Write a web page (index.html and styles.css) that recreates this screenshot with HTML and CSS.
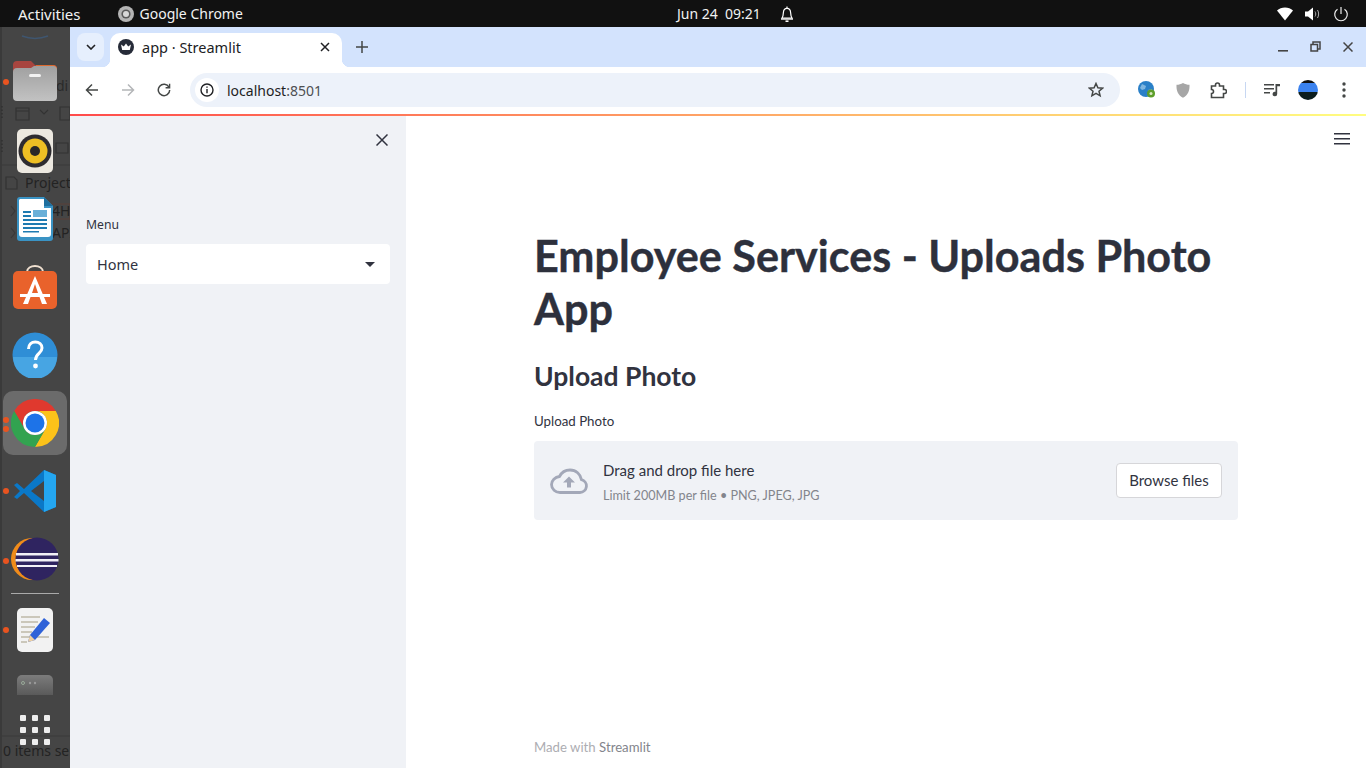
FILE: index.html
```html
<!DOCTYPE html>
<html lang="en">
<head>
    <meta charset="UTF-8">
    <title>app · Streamlit</title>
    <link rel="stylesheet" href="styles.css">
</head>
<body>
    <div class="topbar">
        <div class="topbar-left">
            <span class="activities">Activities</span>
            <span class="app-name">
                <svg class="app-icon" width="18" height="18" viewBox="0 0 18 18"><circle cx="9" cy="9" r="8" fill="#b5b5b5"/><circle cx="9" cy="9" r="4.6" fill="#5a5a5a"/><circle cx="9" cy="9" r="3" fill="#d8d8d8"/></svg>
                Google Chrome
            </span>
        </div>
        <div class="clock">
            <span>Jun 24&nbsp;&nbsp;09:21</span>
            <svg width="16" height="18" viewBox="0 0 16 18" fill="none" stroke="#fff" stroke-width="1.2"><path d="M3 13c1-1.5 1.3-3 1.4-5.500C4.500 5 6 3.300 8 3.300s3.500 1.700 3.600 4.200c.1 2.500.4 4 1.400 5.500z"/><path d="M8 1.500v1.800"/><path d="M2 14h12" stroke-width="1.400"/><path d="M6.500 16.200h3" stroke-width="1.600"/></svg>
        </div>
        <div class="tray">
            <svg width="16" height="14" viewBox="0 0 16 14"><path d="M0 3.500C2 1.500 5 .5 8 .5s6 1 8 3L8 13.500z" fill="#fff"/></svg>
            <svg width="16" height="14" viewBox="0 0 16 14"><path d="M0 4.500h3L8 .5v13l-5-4H0z" fill="#fff"/><path d="M10 4.500c1 1.500 1 3.500 0 5M12.500 3c1.500 2.500 1.500 5.500 0 8" fill="none" stroke="#aaa" stroke-width="1"/></svg>
            <svg width="16" height="16" viewBox="0 0 16 16" fill="none" stroke="#eee" stroke-width="1.200"><path d="M8 1v7"/><path d="M4.500 3.200a6.300 6.300 0 1 0 7 0"/></svg>
        </div>
    </div>

    <div class="desktop">
        <div class="dock">
            <!-- window behind the dock, shows through it -->
            <svg class="ghost-layer" width="70" height="741" viewBox="0 27 70 741" fill="none" stroke="#333" stroke-width="1.200">
                <path d="M22 36c8 3 18 3 26 0" stroke="#3f5670" stroke-width="1.500"/>
                <path d="M2 106v14M2 140v12" stroke-dasharray="1.500 2" stroke="#2e2e2e"/>
                <path d="M16 108h13v12H16zM16 111h13"/>
                <path d="M40 110l4 4 4-4"/>
                <path d="M60 107h10v13H60zM56 143h12v10H56z"/>
                <path d="M46 149h3"/>
                <path d="M0 165h70" stroke="#3b3b3b"/>
                <path d="M6 177h8l3 3v9H6z"/>
                <path d="M11 206l4 5-4 5M11 228l4 5-4 5" stroke="#383838"/>
                <path d="M50 204h20v15H50z" stroke="#5a4038"/>
                <path d="M0 736h70" stroke="#3a3a3a"/>
            </svg>
            <span class="ghost ghost-di">di</span>
            <span class="ghost ghost-project">Project</span>
            <span class="ghost ghost-4h">4H</span>
            <span class="ghost ghost-api">API</span>
            <span class="ghost ghost-items">0 items se</span>

            <div class="dock-item">
                <span class="run-dot dot-folder"></span>
                <svg width="46" height="46" viewBox="0 0 46 46">
                    <defs><linearGradient id="folderFront" x1="0" y1="0" x2="0" y2="1"><stop offset="0" stop-color="#a0a0a0"/><stop offset="1" stop-color="#c2c2c2"/></linearGradient></defs>
                    <path d="M1 5a4 4 0 0 1 4-4h14l4 4h18a4 4 0 0 1 4 4v12H1z" fill="#a8453f"/><path d="M24 5h17a4 4 0 0 1 4 4v10H24z" fill="#dd6a2f"/><path d="M1 12a4 4 0 0 1 4-4h14l3-2h19a4 4 0 0 1 4 4v27a4 4 0 0 1-4 4H5a4 4 0 0 1-4-4z" fill="url(#folderFront)"/><rect x="17" y="14" width="12" height="3" rx="1.500" fill="#f2f2f2"/>
                </svg>
            </div>
            <div class="dock-item">
                <svg width="36" height="44" viewBox="0 0 36 44"><rect width="36" height="44" rx="5" fill="#ece8e0"/><circle cx="18" cy="22" r="16.500" fill="#2e2c30"/><circle cx="18" cy="22" r="12.500" fill="#eebf24"/><circle cx="18" cy="22" r="5" fill="#2a2828"/></svg>
            </div>
            <div class="dock-item">
                <svg width="36" height="44" viewBox="0 0 36 44"><path d="M3 0h24l9 9v32a3 3 0 0 1-3 3H3a3 3 0 0 1-3-3V3a3 3 0 0 1 3-3z" fill="#3a93c4"/><path d="M3 2h24v9h7v26a3 3 0 0 1-3 3H5a3 3 0 0 1-3-3V3z" fill="#fff"/><path d="M27 0l9 9h-9z" fill="#1e6f9e"/><path d="M6 14h8v2H6zM6 18h8v2H6zM6 22h24v2H6zM6 26h24v2H6zM6 30h24v2H6zM6 34h16v1.500H6z" fill="#1f7bb1"/><path d="M16 13h14v7H16z" fill="#6ab0d8"/></svg>
            </div>
            <div class="dock-item">
                <svg width="46" height="44" viewBox="0 0 46 44"><path d="M15 7c0-8 16-8 16 0" fill="none" stroke="#f0e0d0" stroke-width="2"/><rect x="1" y="6" width="44" height="38" rx="5" fill="#e9622b"/><path d="M23 11L11 39h5l2.500-7h9l2.500 7h5z" fill="#fff"/><path d="M8 29h30v3H8z" fill="#fff"/><path d="M23 19l-3 9h6z" fill="#e9622b"/></svg>
            </div>
            <div class="dock-item">
                <svg width="46" height="46" viewBox="0 0 46 46"><circle cx="23" cy="23" r="22.500" fill="#2f8ed6"/><path d="M1 25h44a22 22 0 0 1-44 0z" fill="#47a5e3"/><path d="M16.500 17c0-4.500 3-7 6.800-7s6.700 2.500 6.700 6c0 5.500-6.500 5.500-6.500 12" fill="none" stroke="#fff" stroke-width="3"/><circle cx="23.500" cy="34" r="2.400" fill="#fff"/></svg>
            </div>
            <div class="dock-item dock-active">
                <span class="run-dot dot-a"></span>
                <span class="run-dot dot-b"></span>
                <svg width="48" height="48" viewBox="0 0 48 48"><path d="M3.200 12A24 24 0 0 1 44.800 12H24A12 12 0 0 0 13.600 30z" fill="#e0392e"/><path d="M44.800 12A24 24 0 0 1 24 48L34.400 30A12 12 0 0 0 24 12z" fill="#fcc21a"/><path d="M24 48A24 24 0 0 1 3.200 12L13.600 30A12 12 0 0 0 34.400 30z" fill="#32a350"/><circle cx="24" cy="24" r="12" fill="#fff"/><circle cx="24" cy="24" r="9.500" fill="#1d73e8"/></svg>
            </div>
            <div class="dock-item">
                <span class="run-dot"></span>
                <svg width="42" height="42" viewBox="0 0 42 42"><path d="M30 0L10 19 3 13l-3 2 6 6-6 6 3 2 7-6 20 19 12-5V5z" fill="#0a78c8"/><path d="M30 0l12 5v32l-12 5z" fill="#24a6f0"/><path d="M30 11L17 21l13 10z" fill="#444"/></svg>
            </div>
            <div class="dock-item">
                <span class="run-dot dot-eclipse"></span>
                <svg width="48" height="46" viewBox="0 0 48 46"><circle cx="21" cy="23" r="21" fill="#f08c1a"/><circle cx="26" cy="23" r="21.500" fill="#2f2460"/><path d="M5 17h42v2.500H5zM4.500 23h43v2.500h-43zM6 29h40v2H6z" fill="#f2f0f6"/></svg>
            </div>
            <div class="dock-sep"></div>
            <div class="dock-item">
                <span class="run-dot"></span>
                <svg width="36" height="44" viewBox="0 0 36 44"><rect width="36" height="44" rx="5" fill="#f2f2f2"/><path d="M4 8h19v2H4zM4 13h17v2H4zM4 18h14v2H4zM4 23h11v2H4zM4 28h28v2H4zM4 33h6v2H4z" fill="#cbc7ba"/><path d="M27 10l6 5-15 17-7 2 2-7z" fill="#2f62d8"/><path d="M13 27l5 5-7 2z" fill="#f0d0a0"/></svg>
            </div>
            <div class="dock-item dock-short">
                <svg width="36" height="20" viewBox="0 0 36 20">
                    <defs><linearGradient id="driveFade" x1="0" y1="0" x2="0" y2="1"><stop offset="0" stop-color="#7c7c7c"/><stop offset="1" stop-color="#5a5a5a"/></linearGradient></defs>
                    <path d="M5 0h26a5 5 0 0 1 5 5v15H0V5a5 5 0 0 1 5-5z" fill="url(#driveFade)"/><circle cx="6" cy="8" r="1.500" fill="none" stroke="#9a9"/><circle cx="13" cy="8" r="1.200" fill="#999"/><circle cx="18" cy="8" r="1.200" fill="#999"/>
                </svg>
            </div>
            <div class="app-grid">
                <i></i><i></i><i></i><i></i><i></i><i></i><i></i><i></i><i></i>
            </div>
        </div>

        <div class="window">
            <div class="tabstrip">
                <div class="tab-list-btn">
                    <svg width="10" height="6" viewBox="0 0 10 6" fill="none" stroke="#202124" stroke-width="1.600"><path d="M1 1l4 4 4-4"/></svg>
                </div>
                <div class="tab">
                    <svg width="16" height="16" viewBox="0 0 16 16"><circle cx="8" cy="8" r="8" fill="#262b38"/><path d="M3 5.500l2.800 2L8 4.500l2.200 3 2.800-2-1.200 5.500H4.200z" fill="#fff"/></svg>
                    <span class="tab-title">app · Streamlit</span>
                    <svg class="tab-close" width="10" height="10" viewBox="0 0 10 10" stroke="#202124" stroke-width="1.500"><path d="M1 1l8 8M9 1l-8 8"/></svg>
                </div>
                <svg class="new-tab" width="12" height="12" viewBox="0 0 12 12" stroke="#444746" stroke-width="1.500"><path d="M6 0v12M0 6h12"/></svg>
                <div class="win-controls">
                    <svg width="10" height="10" viewBox="0 0 10 10"><path d="M0 8h10v1.600H0z" fill="#444"/></svg>
                    <svg width="11" height="11" viewBox="0 0 11 11" fill="none" stroke="#444" stroke-width="1.500"><path d="M3 3V1h7v7H8"/><path d="M1 3.500h6.500V10H1z"/></svg>
                    <svg width="10" height="10" viewBox="0 0 10 10" stroke="#444" stroke-width="1.500"><path d="M.5.500l9 9M9.500.5l-9 9"/></svg>
                </div>
            </div>

            <div class="toolbar">
                <svg width="14" height="14" viewBox="0 0 14 14" fill="none" stroke="#444746" stroke-width="1.500"><path d="M13 7H1.500M7 1.500L1.500 7 7 12.500"/></svg>
                <svg width="14" height="14" viewBox="0 0 14 14" fill="none" stroke="#b4b6b8" stroke-width="1.500"><path d="M1 7h11.500M7 1.500L12.500 7 7 12.500"/></svg>
                <svg width="14" height="14" viewBox="0 0 14 14" fill="none" stroke="#444746" stroke-width="1.500"><path d="M12 4.200A5.700 5.700 0 1 0 12.700 7"/><path d="M12.600.8v4H8.600" stroke-width="1.400"/></svg>
                <div class="omnibox">
                    <span class="site-info">
                        <svg width="14" height="14" viewBox="0 0 14 14" fill="none" stroke="#202124" stroke-width="1.400"><circle cx="7" cy="7" r="6"/><path d="M7 6v4.200M7 3.400v1.400"/></svg>
                    </span>
                    <span class="url">localhost<span class="url-port">:8501</span></span>
                    <svg class="star" width="16" height="16" viewBox="0 0 16 16" fill="none" stroke="#444746" stroke-width="1.500"><path d="M8 1.500l1.900 4.300 4.600.4-3.500 3 1.100 4.600L8 11.400l-4.100 2.400L5 9.200l-3.500-3 4.600-.4z"/></svg>
                </div>
                <div class="extensions">
                    <svg width="18" height="18" viewBox="0 0 18 18"><circle cx="8" cy="8" r="8" fill="#2a80c8"/><path d="M4 3l4 2-1 3-3 1-2-2zM10 9l4-1 1 3-4 4z" fill="#7fb6e0"/><circle cx="13" cy="12.500" r="4" fill="#5d9e2a"/><circle cx="13" cy="12.500" r="1.500" fill="#d8e8c0"/></svg>
                    <svg class="ext-wide" width="14" height="15" viewBox="0 0 14 15"><path d="M7 0c2 1.200 4 1.700 6.500 1.800.3 6-1.500 10.500-6.500 13C2 12.300.2 7.800.5 1.800 3 1.700 5 1.200 7 0z" fill="#a6a6a6"/></svg>
                    <svg class="ext-wide" width="17" height="17" viewBox="0 0 17 17" fill="none" stroke="#444746" stroke-width="1.600"><path d="M1.500 4h4V3a2 2 0 0 1 4 0v1h4v3.500h1a2 2 0 0 1 0 4h-1v4h-12v-4a2 2 0 0 0 0-4z"/></svg>
                    <span class="ext-divider"></span>
                    <svg width="16" height="14" viewBox="0 0 16 14" fill="#444746"><path d="M0 1h10v1.600H0zM0 5h10v1.600H0zM0 9h6v1.600H0z"/><path d="M11.500 1H16v2.200h-2.800V11a2.300 2.300 0 1 1-1.700-2.200z"/></svg>
                    <span class="avatar"></span>
                    <svg class="kebab" width="4" height="16" viewBox="0 0 4 16" fill="#444746"><circle cx="2" cy="2" r="1.700"/><circle cx="2" cy="8" r="1.700"/><circle cx="2" cy="14" r="1.700"/></svg>
                </div>
            </div>

            <div class="app-decoration"></div>

            <div class="app">
                <aside class="sidebar">
                    <svg class="sidebar-close" width="12" height="12" viewBox="0 0 12 12" stroke="#31333f" stroke-width="1.500"><path d="M.5.500l11 11M11.500.5l-11 11"/></svg>
                    <label class="select-label">Menu</label>
                    <div class="select">
                        <span>Home</span>
                        <span class="caret"></span>
                    </div>
                </aside>
                <main class="main">
                    <svg class="hamburger" width="16" height="12" viewBox="0 0 16 12" fill="#31333f"><path d="M0 0h16v1.600H0zM0 5h16v1.600H0zM0 10h16v1.600H0z"/></svg>
                    <div class="block">
                        <h1>Employee Services - Uploads Photo App</h1>
                        <h2>Upload Photo</h2>
                        <label class="upload-label">Upload Photo</label>
                        <div class="dropzone">
                            <svg class="cloud" width="38" height="26" viewBox="0 0 38 26"><path d="M10 24.500h20a6.500 6.500 0 0 0 1.500-12.800C30.500 6 26 2 20 2c-5 0-8.500 2.500-10.500 6.500C5 9 1.500 12.500 1.500 16.500c0 4.500 4 8 8.500 8z" fill="none" stroke="#a3a8b8" stroke-width="2.800"/><path d="M19 8.500l6 6h-4v5h-4v-5h-4z" fill="#a3a8b8"/></svg>
                            <div class="dropzone-text">
                                <span class="drop-title">Drag and drop file here</span>
                                <span class="drop-limit">Limit 200MB per file • PNG, JPEG, JPG</span>
                            </div>
                            <button class="browse">Browse files</button>
                        </div>
                    </div>
                    <footer class="footer">Made with <span class="footer-link">Streamlit</span></footer>
                </main>
            </div>
        </div>
    </div>
</body>
</html>
```

FILE: styles.css
```css
* {
    box-sizing: border-box;
}
html, body {
    height: 100%;
}
body {
    margin: 0;
    display: flex;
    flex-direction: column;
    overflow: hidden;
    font-family: "Lato", "Noto Sans", sans-serif;
    color: #31333f;
    background-color: #fff;
}

/* gnome top bar */
.topbar {
    position: relative;
    flex: 0 0 27px;
    display: flex;
    align-items: center;
    justify-content: space-between;
    padding: 0 17px 0 18px;
    background-color: #111;
    color: #f2f2f2;
    font-family: "Noto Sans", sans-serif;
    font-size: 14px;
}
.topbar-left {
    display: flex;
    align-items: center;
    gap: 36px;
}
.activities {
    font-size: 15px;
}
.app-name {
    display: flex;
    align-items: center;
    gap: 5px;
}
.clock {
    position: absolute;
    left: 677px;
    top: 0;
    height: 27px;
    display: flex;
    align-items: center;
    gap: 18px;
}
.tray {
    display: flex;
    align-items: center;
    gap: 12px;
}

.desktop {
    flex: 1;
    display: flex;
    min-height: 0;
}

/* dock */
.dock {
    position: relative;
    flex: 0 0 70px;
    display: flex;
    flex-direction: column;
    align-items: center;
    padding-top: 22px;
    overflow: hidden;
    background-color: #454545;
    box-shadow: inset 2px 0 0 #3a3a3a;
}
.ghost-layer {
    position: absolute;
    left: 0;
    top: 0;
}
.ghost {
    position: absolute;
    color: #232323;
    font-family: "Noto Sans", sans-serif;
    font-size: 14px;
    white-space: nowrap;
}
.ghost-di { left: 56px; top: 49px; color: #2a2a2a; }
.ghost-project { left: 25px; top: 146px; }
.ghost-4h { left: 52px; top: 174px; }
.ghost-api { left: 52px; top: 196px; }
.ghost-items { left: 3px; top: 714px; }
.dock-item {
    position: relative;
    flex: 0 0 68px;
    width: 64px;
    display: flex;
    align-items: center;
    justify-content: center;
}
.dock-active {
    height: 64px;
    flex-basis: 64px;
    margin: 2px 0;
    border-radius: 10px;
    background-color: #6b6b6b;
}
.dock-short {
    flex-basis: 30px;
    margin-top: 6px;
}
.run-dot {
    position: absolute;
    left: 0;
    top: 31px;
    width: 6px;
    height: 6px;
    border-radius: 50%;
    background-color: #e95420;
}
.dot-folder { top: 30px; }
.dot-a { top: 26px; }
.dot-b { top: 35px; }
.dot-eclipse { top: 33px; }
.dock-sep {
    flex: 0 0 1px;
    width: 48px;
    margin: 0 0 2px;
    background-color: #aaa;
}
.app-grid {
    position: relative;
    display: grid;
    grid-template-columns: repeat(3, 6px);
    gap: 6px;
    margin-top: 15px;
}
.app-grid i {
    height: 6px;
    border-radius: 1px;
    background-color: #eee;
}

/* browser window */
.window {
    flex: 1;
    display: flex;
    flex-direction: column;
    min-width: 0;
    font-family: "Noto Sans", sans-serif;
}
.tabstrip {
    flex: 0 0 40px;
    display: flex;
    align-items: flex-start;
    padding: 6px 0 0 7px;
    background-color: #d3e3fd;
}
.tab-list-btn {
    width: 27px;
    height: 28px;
    display: flex;
    align-items: center;
    justify-content: center;
    border-radius: 8px;
    background-color: #e6effd;
}
.tab {
    position: relative;
    width: 232px;
    height: 34px;
    margin-left: 6px;
    padding: 0 12px 6px 8px;
    display: flex;
    align-items: center;
    gap: 8px;
    border-radius: 10px 10px 0 0;
    background-color: #fff;
    font-size: 14.500px;
    color: #202124;
}
.tab::before, .tab::after {
    content: "";
    position: absolute;
    bottom: 0;
    width: 8px;
    height: 8px;
}
.tab::before {
    left: -8px;
    background: radial-gradient(circle at 0 0, transparent 8px, #fff 8.500px);
}
.tab::after {
    right: -8px;
    background: radial-gradient(circle at 100% 0, transparent 8px, #fff 8.500px);
}
.tab-title {
    flex: 1;
}
.new-tab {
    margin: 8px 0 0 14px;
}
.win-controls {
    margin-left: auto;
    display: flex;
    align-items: center;
    gap: 22px;
    padding: 8px 13px 0 0;
}
.toolbar {
    flex: 0 0 47px;
    display: flex;
    align-items: center;
    gap: 22px;
    padding: 0 15px 1px 15px;
    border-radius: 10px 10px 0 0;
    background-color: #fff;
}
.omnibox {
    flex: 0 0 930px;
    height: 34px;
    margin-left: -3px;
    padding: 0 16px 0 5px;
    display: flex;
    align-items: center;
    border-radius: 17px;
    background-color: #edf2fa;
}
.site-info {
    width: 24px;
    height: 24px;
    display: flex;
    align-items: center;
    justify-content: center;
    border-radius: 50%;
    background-color: #fff;
}
.url {
    flex: 1;
    margin-left: 8px;
    font-size: 14px;
    color: #1f1f1f;
}
.url-port {
    color: #4d4f52;
}
.extensions {
    display: flex;
    align-items: center;
    gap: 18px;
    margin-left: -4px;
}
.ext-wide {
    margin-left: 2px;
}
.kebab {
    margin-left: 6px;
}
.ext-divider {
    width: 1px;
    height: 16px;
    background-color: #c7d7f2;
}
.avatar {
    width: 20px;
    height: 20px;
    border-radius: 50%;
    background: linear-gradient(#111 0 15%, #3b82ee 15% 60%, #0b1c1c 60%);
}
.app-decoration {
    flex: 0 0 2px;
    background: linear-gradient(90deg, #ff4b4b, #fffd80);
}

/* streamlit app */
.app {
    flex: 1;
    display: flex;
    min-height: 0;
}
.sidebar {
    position: relative;
    flex: 0 0 336px;
    padding: 100px 16px 0;
    background-color: #f0f2f6;
}
.sidebar-close {
    position: absolute;
    top: 18px;
    right: 18px;
}
.select-label {
    display: block;
    margin-bottom: 11px;
    font-size: 12.200px;
    line-height: 17px;
}
.select {
    height: 40px;
    padding: 0 15px 0 11px;
    display: flex;
    align-items: center;
    justify-content: space-between;
    border-radius: 4px;
    background-color: #fff;
    font-size: 14.500px;
}
.caret {
    width: 0;
    height: 0;
    border-left: 5px solid transparent;
    border-right: 5px solid transparent;
    border-top: 5px solid #31333f;
}
.main {
    position: relative;
    flex: 1;
    display: flex;
    flex-direction: column;
    font-family: "Lato", "Noto Sans", sans-serif;
}
.hamburger {
    position: absolute;
    top: 17px;
    right: 16px;
}
.block {
    width: 704px;
    margin: 113px auto 0;
}
h1 {
    margin: 0;
    font-size: 43.150px;
    line-height: 53px;
    font-weight: 700;
    color: #2d303c;
    -webkit-text-stroke: 0.4px #2d303c;
}
h2 {
    margin: 21px 0 0;
    font-size: 26.500px;
    line-height: 40px;
    font-weight: 700;
}
.upload-label {
    display: block;
    margin-top: 17px;
    margin-bottom: 11px;
    font-size: 13.300px;
    line-height: 17px;
}
.dropzone {
    height: 79px;
    padding: 0 16px;
    display: flex;
    align-items: center;
    border-radius: 4px;
    background-color: #f0f2f6;
}
.cloud {
    flex: none;
}
.dropzone-text {
    flex: 1;
    display: flex;
    flex-direction: column;
    gap: 7px;
    margin-left: 15px;
    padding-top: 3px;
}
.drop-title {
    font-size: 15px;
    line-height: 20px;
}
.drop-limit {
    font-size: 12.600px;
    line-height: 18px;
    color: #83858c;
}
.browse {
    width: 106px;
    height: 35px;
    padding-bottom: 3px;
    border: 1px solid #d6d6d9;
    border-radius: 4px;
    background-color: #fff;
    color: #31333f;
    font-family: inherit;
    font-size: 15px;
}
.footer {
    margin-top: auto;
    width: 704px;
    margin-left: 128px;
    padding-bottom: 12px;
    font-size: 13.200px;
    line-height: 17px;
    color: #adadb2;
}
.footer-link {
    color: #83858c;
}
```
